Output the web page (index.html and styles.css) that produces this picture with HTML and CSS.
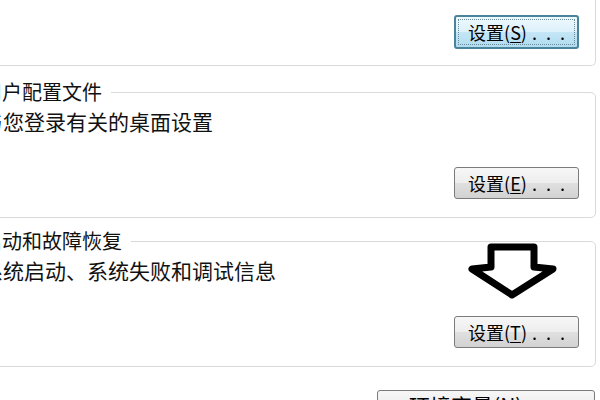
FILE: index.html
```html
<!DOCTYPE html>
<html lang="zh-CN">
<head>
  <meta charset="UTF-8">
  <title>系统属性 - 高级</title>
  <link rel="stylesheet" href="styles.css">
</head>
<body>
  <div class="panel">
    <div class="group group-top">
      <div class="actions">
        <button class="btn btn-focus">设置(<u>S</u>)<span class="dots">...</span></button>
      </div>
    </div>

    <fieldset class="group">
      <legend>用户配置文件</legend>
      <div class="group-body">
        <p class="desc">与您登录有关的桌面设置</p>
        <div class="actions">
          <button class="btn">设置(<u>E</u>)<span class="dots">...</span></button>
        </div>
      </div>
    </fieldset>

    <fieldset class="group group-last">
      <legend>启动和故障恢复</legend>
      <div class="group-body">
        <p class="desc">系统启动、系统失败和调试信息</p>
        <!-- hint arrow pointing at the button -->
        <svg class="arrow" width="90" height="57" viewBox="0 0 90 57">
          <polygon points="23,4 66,4 66,24 85,26 44,52 4,26 23,24" fill="#fff" stroke="#000" stroke-width="7" stroke-linejoin="round"/>
        </svg>
        <div class="actions">
          <button class="btn">设置(<u>T</u>)<span class="dots">...</span></button>
        </div>
      </div>
    </fieldset>

    <div class="actions footer">
      <button class="btn btn-wide">环境变量(<u>N</u>)<span class="dots">...</span></button>
    </div>
  </div>
</body>
</html>
```

FILE: styles.css
```css
body {
  margin: 0;
  background: #fff;
  color: #111;
  font-family: "Noto Sans CJK SC", "Noto Sans", sans-serif;
  overflow: hidden;
}

.panel {
  margin-left: -40px;
  width: 636px;
}

.group {
  box-sizing: border-box;
  min-width: 0;
  margin: 15px 0 0;
  padding: 0 16px 18px 21px;
  border: 1px solid #d9d9d9;
  border-radius: 5px;
}

.group-top {
  margin-top: 0;
  padding-top: 15px;
  padding-bottom: 16px;
  border-top: 0;
  border-radius: 0 0 5px 5px;
}

.group-last {
  margin-top: 12px;
}

legend {
  padding: 0 9px 0 0;
  font-size: 20px;
  line-height: 22px;
}

.group-body {
  position: relative;
  padding-top: 5px;
}

.desc {
  margin: 0;
  font-size: 21px;
  line-height: 26px;
}

.actions {
  display: flex;
  justify-content: flex-end;
}

.group-body .actions {
  margin-top: 33px;
}

.footer {
  margin-top: 23px;
  padding-right: 1px;
}

.arrow {
  position: absolute;
  top: -9px;
  right: 21px;
}

.btn {
  width: 125px;
  height: 32px;
  padding: 0;
  border: 1px solid #7b7b7b;
  border-radius: 3px;
  background: linear-gradient(#f7f7f7, #ededed 50%, #e0e0e0 51%, #d2d2d2);
  color: #000;
  font-family: "Noto Sans CJK SC", "Noto Sans", sans-serif;
  font-size: 18px;
  line-height: 1;
}

.btn u {
  text-underline-offset: 2px;
}

.dots {
  margin-left: 5px;
  margin-right: -9px;
  letter-spacing: 9px;
}

.btn-focus {
  height: 34px;
  border: 2px solid #4b8399;
  background: linear-gradient(#eef8fd, #dcf1fb 50%, #c4e6f6 51%, #b0dcf1);
  outline: 1px dotted #6b8c99;
  outline-offset: -5px;
}

.btn-wide {
  width: 218px;
  height: 30px;
  font-size: 21px;
}
```
